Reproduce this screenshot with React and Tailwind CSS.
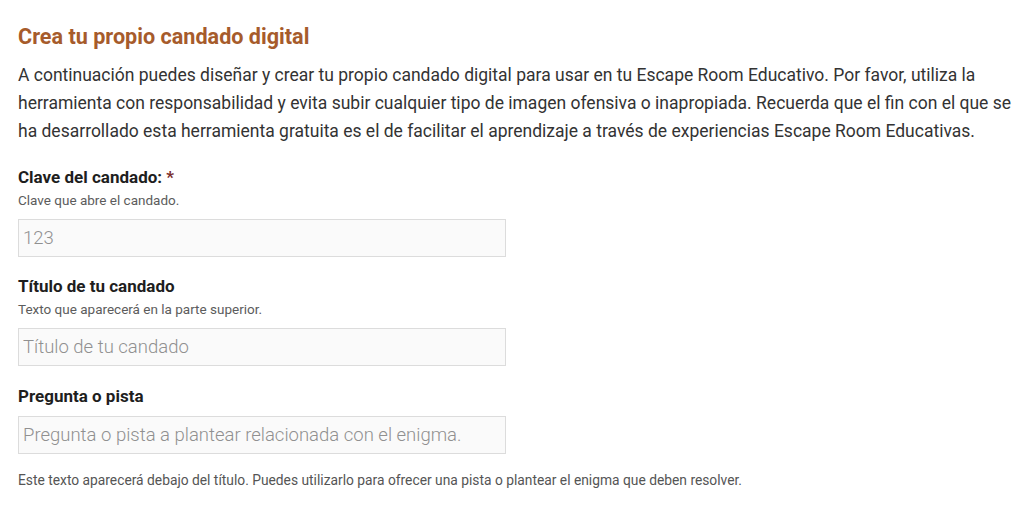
const Field = ({ label, required, help, placeholder, value, className }) => (
  <div className={className}>
    <label className="block text-[17px] font-bold text-[#1e1e1e] leading-[24px]">
      {label}
      {required && <span className="text-[#7a2e2e]"> *</span>}
    </label>
    {help && <p className="mt-[2px] text-[13.5px] text-[#5c5c5c] leading-[18px]">{help}</p>}
    <input
      type="text"
      readOnly
      defaultValue={value}
      placeholder={placeholder}
      className={`${help ? "mt-[10px]" : "mt-[8px]"} block w-[488px] h-[38px] px-[4px] bg-[#fafafa] border border-[#dcdcdc] text-[18.5px] font-light text-[#909090] placeholder-[#909090] outline-none`}
    />
  </div>
);

export default function App() {
  return (
    <div className="min-h-screen bg-white px-[18px] pt-[24px]" style={{ fontFamily: "Roboto, 'Liberation Sans', sans-serif" }}>
      <h1 className="text-[21.6px] font-bold text-[#a65b2b] leading-[26px]">Crea tu propio candado digital</h1>
      <p className="mt-[11px] w-[1000px] text-[17.5px] text-[#333] leading-[28px]">
        A continuación puedes diseñar y crear tu propio candado digital para usar en tu Escape Room Educativo. Por favor, utiliza la
        herramienta con responsabilidad y evita subir cualquier tipo de imagen ofensiva o inapropiada. Recuerda que el fin con el que se
        ha desarrollado esta herramienta gratuita es el de facilitar el aprendizaje a través de experiencias Escape Room Educativas.
      </p>
      <Field className="mt-[20px]" label="Clave del candado:" required help="Clave que abre el candado." value="123" />
      <Field className="mt-[17px]" label="Título de tu candado" help="Texto que aparecerá en la parte superior." placeholder="Título de tu candado" />
      <Field className="mt-[18px]" label="Pregunta o pista" placeholder="Pregunta o pista a plantear relacionada con el enigma." />
      <p className="mt-[17px] text-[13.8px] text-[#555] leading-[18px]">
        Este texto aparecerá debajo del título. Puedes utilizarlo para ofrecer una pista o plantear el enigma que deben resolver.
      </p>
    </div>
  );
}
